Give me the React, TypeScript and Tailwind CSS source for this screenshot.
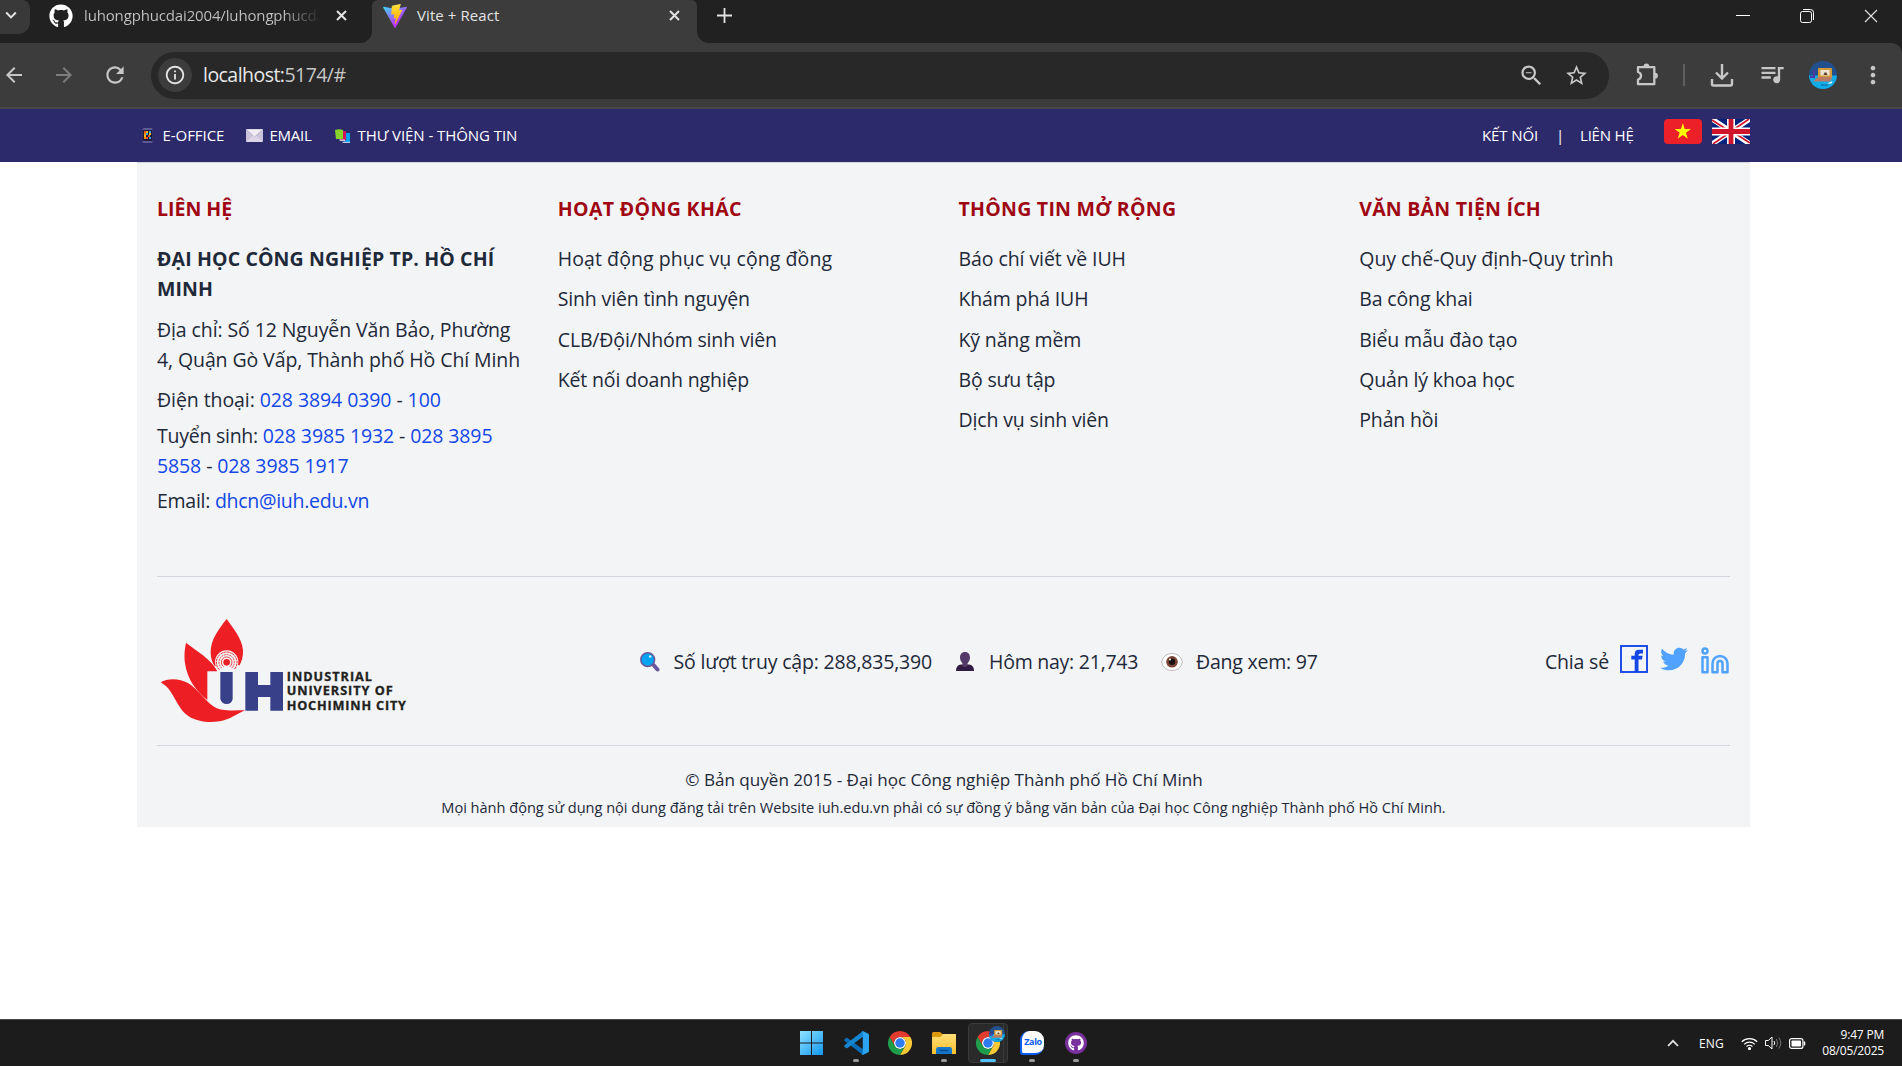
import React from "react";
import { FaGithub, FaTwitter } from "react-icons/fa";
import {
  MdArrowBack,
  MdArrowForward,
  MdRefresh,
  MdInfoOutline,
  MdZoomOut,
  MdStarOutline,
  MdQueueMusic,
  MdMoreVert,
} from "react-icons/md";
import { Linkedin } from "lucide-react";

function Chevron({ up = false, size = 12 }: { up?: boolean; size?: number }) {
  return (
    <svg width={size} height={size} viewBox="0 0 12 12" fill="none" stroke="#e3e3e3" strokeWidth={up ? 1.8 : 2}>
      <path d={up ? "M1 9l5-5.2L11 9" : "M1.2 3.5L6 8.4l4.8-4.9"} />
    </svg>
  );
}

function CloseX({ size = 11, width = 2 }: { size?: number; width?: number }) {
  return (
    <svg width={size} height={size} viewBox={`0 0 ${size} ${size}`} stroke="#e3e3e3" strokeWidth={width}>
      <path d={`M1 1L${size - 1} ${size - 1}M${size - 1} 1L1 ${size - 1}`} />
    </svg>
  );
}

function ViteLogo() {
  return (
    <svg width="24" height="24" viewBox="0 0 256 257" className="shrink-0">
      <defs>
        <linearGradient id="va" x1="-.8%" x2="57.6%" y1="7.7%" y2="78.4%">
          <stop offset="0%" stopColor="#41D1FF" />
          <stop offset="100%" stopColor="#BD34FE" />
        </linearGradient>
        <linearGradient id="vb" x1="43.4%" x2="50.3%" y1="2.2%" y2="89%">
          <stop offset="0%" stopColor="#FFEA83" />
          <stop offset="8.3%" stopColor="#FFDD35" />
          <stop offset="100%" stopColor="#FFA800" />
        </linearGradient>
      </defs>
      <path
        fill="url(#va)"
        d="M255.153 37.938L134.897 252.976c-2.483 4.44-8.862 4.466-11.382.048L.875 37.958c-2.746-4.814 1.371-10.646 6.827-9.67l120.385 21.517a6.537 6.537 0 0 0 2.322-.004l117.867-21.483c5.438-.991 9.574 4.796 6.877 9.62Z"
      />
      <path
        fill="url(#vb)"
        d="M185.432.063L96.44 17.501a3.268 3.268 0 0 0-2.634 3.014l-5.474 92.456a3.268 3.268 0 0 0 3.997 3.378l24.777-5.718c2.318-.535 4.413 1.507 3.936 3.838l-7.361 36.047c-.495 2.426 1.782 4.5 4.151 3.78l15.304-4.649c2.372-.72 4.652 1.36 4.15 3.788l-11.698 56.621c-.732 3.542 3.979 5.473 5.943 2.437l1.313-2.028l72.516-144.72c1.215-2.423-.88-5.186-3.54-4.672l-25.505 4.922c-2.396.462-4.435-1.77-3.759-4.114l16.646-57.705c.677-2.35-1.37-4.583-3.769-4.113Z"
      />
    </svg>
  );
}

function Avatar({ size }: { size: number }) {
  return (
    <svg width={size} height={size} viewBox="0 0 28 28">
      <defs>
        <clipPath id={`av${size}`}>
          <circle cx="14" cy="14" r="14" />
        </clipPath>
      </defs>
      <g clipPath={`url(#av${size})`}>
        <rect width="28" height="28" fill="#22508f" />
        <rect y="14.5" width="28" height="13.5" fill="#10abe8" />
        <path d="M4 9h2v7H4zM1 15h5v2H1z" fill="#4b3aa5" />
        <rect x="9" y="7" width="14" height="11" rx="1" fill="#d59a3a" />
        <rect x="11.5" y="9" width="9" height="5.500" fill="#eee3d2" />
        <path d="M14.500 14l1-2.500h2l1 2.500z" fill="#5c4432" />
        <path d="M4 20.500L9 16h14.500L21 20.500z" fill="#b77b67" />
        <path d="M18 22.500l5.500-2.500-1 2.500z" fill="#fff" />
        <path d="M12 24h7" stroke="#0a5d9a" />
      </g>
    </svg>
  );
}

function ChromeLogo() {
  return (
    <svg width="24" height="24" viewBox="0 0 48 48">
      <circle cx="24" cy="24" r="12" fill="#fff" />
      <path fill="#e33b2e" d="M24 12h20.78A24 24 0 0 0 3.215 12L13.608 30l.01-.002A11.985 11.985 0 0 1 24 12z" />
      <path fill="#fcc934" d="M34.39 30L24 48A23.99 23.99 0 0 0 44.78 12H24v.007A11.985 11.985 0 0 1 34.39 30z" />
      <path fill="#1e9e4a" d="M13.609 30L3.218 12A23.99 23.99 0 0 0 24 48l10.394-18v-.007A11.985 11.985 0 0 1 13.613 30z" />
      <circle cx="24" cy="24" r="9.500" fill="#2f7cf0" />
    </svg>
  );
}

function BrowserTabs() {
  return (
    <div className="flex h-[43px] items-start bg-[#202120] text-[15px] text-[#e3e3e3]">
      <div className="flex h-[34px] w-[30px] items-center rounded-br-[12px] rounded-tr-[8px] bg-[#383938] pb-1 pl-[5px]">
        <Chevron />
      </div>
      <div className="flex h-[31px] w-[342px] items-center pl-[19px]">
        <FaGithub className="size-[24px] shrink-0 text-white" />
        <span className="ml-[11px] mr-[18px] w-[234px] whitespace-nowrap bg-gradient-to-r from-[#c4c4c4] from-85% to-[#2c2d2c] bg-clip-text tracking-[-0.15px] text-transparent">
          luhongphucdai2004/luhongphucda
        </span>
        <CloseX />
      </div>
      <div className="relative flex h-[43px] w-[325px] rounded-t-[6px] bg-[#3c3c3c]">
        <svg className="absolute -left-[12px] bottom-0" width="12" height="12">
          <path d="M12 0A12 12 0 0 1 0 12H12z" fill="#3c3c3c" />
        </svg>
        <svg className="absolute -right-[12px] bottom-0" width="12" height="12">
          <path d="M0 0A12 12 0 0 0 12 12H0z" fill="#3c3c3c" />
        </svg>
        <div className="flex h-[31px] items-center pl-[11px]">
          <ViteLogo />
          <span className="ml-[10px] w-[252px] tracking-[0.08px]">Vite + React</span>
          <CloseX />
        </div>
      </div>
      <div className="flex h-[31px] flex-1 items-center pl-[20px]">
        <svg width="15" height="15" viewBox="0 0 15 15" stroke="#e3e3e3" strokeWidth="1.800">
          <path d="M7.500 0v15M0 7.500h15" />
        </svg>
        <div className="ml-auto flex items-center gap-[50px] pr-[24px]">
          <span className="h-px w-[14px] bg-white" />
          <svg width="14" height="14" viewBox="0 0 14 14" fill="none" stroke="#fff">
            <rect x="0.5" y="2.500" width="11" height="11" rx="2" />
            <path d="M3 0.500h7.500a3 3 0 0 1 3 3V11" />
          </svg>
          <CloseX size={14} width={1.1} />
        </div>
      </div>
    </div>
  );
}

function PuzzleIcon() {
  return (
    <svg className="ml-[27px]" width="24" height="24" viewBox="0 0 24 24">
      <path
        d="M2 4.200h16.300v17H2v-4.700q3-.8 3-3.800T2 9z"
        fill="none"
        stroke="#c7c7c7"
        strokeWidth="2.300"
        strokeLinejoin="round"
      />
      <path d="M7.500 3.500a2.900 2.900 0 0 1 5.800 0zM19 9.800a2.900 2.900 0 0 1 0 5.800z" fill="#c7c7c7" />
    </svg>
  );
}

function Toolbar() {
  return (
    <div className="bg-[#202120]">
      <div className="flex h-[66px] items-center rounded-tr-[10px] border-b-2 border-[#474747] bg-[#3c3c3c] text-[#c7c7c7]">
        <div className="flex w-[151px] items-center pl-[2px]">
          <MdArrowBack className="size-[24px]" />
          <MdArrowForward className="ml-[26px] size-[24px] text-[#7d7d7d]" />
          <MdRefresh className="ml-[26px] size-[26px]" />
        </div>
        <div className="flex h-[47px] w-[1458px] items-center rounded-full bg-[#282828] pl-[7px] pr-[20px]">
          <span className="flex size-[34px] items-center justify-center rounded-full bg-[#3c3c3c]">
            <MdInfoOutline className="size-[22px] text-[#e3e3e3]" />
          </span>
          <span className="ml-[11px] text-[19.5px] tracking-[-0.54px] text-[#c7c7c7]">
            <span className="text-[#e8e8e8]">localhost:</span>5174/#
          </span>
          <MdZoomOut className="ml-auto size-[27px]" />
          <MdStarOutline className="ml-[19px] size-[25px]" />
        </div>
        <PuzzleIcon />
        <span className="ml-[23px] h-[22px] w-[2px] bg-[#5e5e5e]" />
        <svg className="ml-[25px]" width="24" height="24" viewBox="0 0 24 24" fill="none" stroke="#c7c7c7" strokeWidth="2.400">
          <path d="M12 1v14M6 9.500l6 6 6-6" />
          <path d="M2 16v5q0 1.500 1.500 1.500h17q1.500 0 1.500-1.500v-5" />
        </svg>
        <MdQueueMusic className="mb-[2px] ml-[24px] size-[28px]" />
        <span className="ml-[23px]">
          <Avatar size={28} />
        </span>
        <MdMoreVert className="ml-[22px] size-[28px]" />
      </div>
    </div>
  );
}

function PhoneIcon() {
  return (
    <svg width="11" height="15" viewBox="0 0 11 15">
      <rect x=".5" width="10" height="15" rx="1.500" fill="#5d5a95" />
      <rect x=".5" y="2" width="10" height="11" fill="#231a3c" />
      <path d="M2 3h2v2H2zM6 7h2v2H6zM4 9h2v2H4z" fill="#f25022" />
      <path d="M4 3h2v2H4zM2 7h2v2H2zM7 5h2v2H7z" fill="#ffb900" />
      <path d="M7 3h2v2H7zM4 5h2v2H4zM7 9h2v2H7z" fill="#29a9e8" />
      <path d="M2 9h2v2H2zM2 5h2v2H2z" fill="#ff8c00" />
    </svg>
  );
}

function MailIcon() {
  return (
    <svg width="17" height="13" viewBox="0 0 17 13">
      <rect width="17" height="13" rx="1" fill="#cbc3d8" />
      <path d="M0 13l6.500-6h4L17 13z" fill="#ddd6e6" />
      <path d="M0 0h17L8.500 8z" fill="#f2eef6" stroke="#a79fba" strokeWidth=".6" />
    </svg>
  );
}

function BooksIcon() {
  return (
    <svg width="15" height="14" viewBox="0 0 15 14">
      <path d="M7 4h8v9H9z" fill="#00a1f1" />
      <path d="M7 12.800h8V14H8z" fill="#b9c6dc" />
      <path d="M4 2h7v9.500H5z" fill="#d2145a" />
      <path d="M4 10.500h6V12H5z" fill="#d9c4dc" />
      <path d="M0 1q4-1.500 8 0v9H1z" fill="#86d32b" />
    </svg>
  );
}

function FlagVN() {
  return (
    <svg width="38" height="25" viewBox="0 0 38 25">
      <rect width="38" height="25" rx="4" fill="#ec2028" />
      <path fill="#ffff00" d="M18.800 4l1.900 6h6.300l-5.100 3.700 1.950 6-5.050-3.700-5.100 3.700 1.950-6L10.600 10h6.300z" />
    </svg>
  );
}

function FlagUK() {
  return (
    <svg width="38" height="25" viewBox="0 0 38 25">
      <rect width="38" height="25" fill="#00247d" />
      <path d="M0 0l38 25M38 0L0 25" stroke="#fff" strokeWidth="5" />
      <path d="M0 1l17 11M21 13l17 11M37 0L21 11M17 14L1 25" stroke="#cf142b" strokeWidth="1.700" />
      <path d="M19 0v25M0 12.500h38" stroke="#fff" strokeWidth="8" />
      <path d="M19 0v25M0 12.500h38" stroke="#cf142b" strokeWidth="4.800" />
    </svg>
  );
}

function TopBar() {
  return (
    <header className="flex h-[53px] items-center bg-[#2d2a6c] pl-[142px] pr-[152px] text-[15px] text-white">
      <PhoneIcon />
      <a className="ml-[9.500px] w-[83.500px] whitespace-nowrap tracking-[-0.05px]">E-OFFICE</a>
      <MailIcon />
      <a className="ml-[6.500px] w-[65.500px] whitespace-nowrap tracking-[-0.25px]">EMAIL</a>
      <BooksIcon />
      <a className="ml-[7.500px] whitespace-nowrap tracking-[-0.06px]">THƯ VIỆN - THÔNG TIN</a>
      <div className="ml-auto flex items-center">
        <a className="w-[74px] whitespace-nowrap tracking-[-0.1px]">KẾT NỐI</a>
        <span className="w-[24px]">|</span>
        <a className="w-[84px] whitespace-nowrap tracking-[-0.2px]">LIÊN HỆ</a>
        <span className="mb-[8px] flex gap-[10px]">
          <FlagVN />
          <FlagUK />
        </span>
      </div>
    </header>
  );
}

const columns = [
  {
    title: "HOẠT ĐỘNG KHÁC",
    tracking: "tracking-[0.36px]",
    firstTracking: "tracking-[0.08px]",
    links: ["Hoạt động phục vụ cộng đồng", "Sinh viên tình nguyện", "CLB/Đội/Nhóm sinh viên", "Kết nối doanh nghiệp"],
  },
  {
    title: "THÔNG TIN MỞ RỘNG",
    tracking: "tracking-[0.26px]",
    firstTracking: "tracking-[-0.08px]",
    links: ["Báo chí viết về IUH", "Khám phá IUH", "Kỹ năng mềm", "Bộ sưu tập", "Dịch vụ sinh viên"],
  },
  {
    title: "VĂN BẢN TIỆN ÍCH",
    tracking: "tracking-[0.24px]",
    firstTracking: "tracking-[-0.04px]",
    links: ["Quy chế-Quy định-Quy trình", "Ba công khai", "Biểu mẫu đào tạo", "Quản lý khoa học", "Phản hồi"],
  },
];

function Contact() {
  return (
    <div>
      <h3 className="mb-[20px] font-bold text-[#9f0712]">LIÊN HỆ</h3>
      <p className="mb-[11px] whitespace-nowrap font-bold tracking-[0.13px]">
        ĐẠI HỌC CÔNG NGHIỆP TP. HỒ CHÍ
        <br />
        MINH
      </p>
      <p className="mb-[10px] whitespace-nowrap tracking-[-0.1px]">
        Địa chỉ: Số 12 Nguyễn Văn Bảo, Phường
        <br />
        4, Quận Gò Vấp, Thành phố Hồ Chí Minh
      </p>
      <p className="mb-[6px] tracking-[-0.08px]">
        Điện thoại: <a className="text-[#1447e6]">028 3894 0390</a> - <a className="text-[#1447e6]">100</a>
      </p>
      <p className="mb-[5px] whitespace-nowrap tracking-[-0.11px]">
        <span className="tracking-[-0.25px]">Tuyển sinh: </span>
        <a className="text-[#1447e6]">028 3985 1932</a> -{" "}
        <a className="text-[#1447e6]">
          028 3895
          <br />
          5858
        </a>{" "}
        - <a className="text-[#1447e6]">028 3985 1917</a>
      </p>
      <p className="tracking-[-0.27px]">
        Email: <a className="text-[#1447e6]">dhcn@iuh.edu.vn</a>
      </p>
    </div>
  );
}

function UniversityLogo() {
  return (
    <svg width="252" height="110" viewBox="81 165 756 330" className="font-['Open_Sans',sans-serif]">
      <g fill="#ed1f24">
        <path d="M290 177C268 205 240 240 242 280C243 298 248 310 254 318L327 318C335 306 340 290 339 270C336 236 310 205 290 177z" />
        <path d="M168 248C198 272 245 298 262 334H232V420C200 395 172 360 165 310C162 285 164 268 168 248z" />
        <path d="M92 367C112 354 148 354 174 369C204 388 226 422 250 439C275 456 312 451 345 451C325 460 305 474 282 481C250 490 205 488 176 469C148 450 138 418 122 395C114 383 104 374 92 367z" />
      </g>
      <circle cx="290" cy="306" r="35" fill="#f3f4f6" />
      <path d="M262 315H328V334H262z" fill="#f3f4f6" />
      <g fill="none" stroke="#ed1f24">
        <path d="M268 329A31 31 0 1 1 312 329" strokeWidth="3" strokeDasharray="7 2" />
        <path d="M276 325A23 23 0 1 1 304 325" strokeWidth="2.500" strokeDasharray="6 2" />
        <path d="M281 320A16 16 0 1 1 299 320" strokeWidth="2.500" />
      </g>
      <circle cx="290" cy="307" r="10" fill="#ed1f24" />
      <path d="M271 336H308V417Q305 432 290 432T271 417z" fill="#38408a" />
      <path d="M346 336H384V375H421V336H459V452H421V411H384V452H346z" fill="#38408a" />
      <g fill="#221f20" stroke="#221f20" strokeWidth="1" fontSize="38" fontWeight="700">
        <text x="470" y="363" textLength="256">INDUSTRIAL</text>
        <text x="470" y="406" textLength="318">UNIVERSITY OF</text>
        <text x="470" y="449" textLength="358">HOCHIMINH CITY</text>
      </g>
    </svg>
  );
}

function MagnifierIcon() {
  return (
    <svg width="20" height="20" viewBox="0 0 20 20">
      <path d="M13.500 13l4 4.500" stroke="#67589e" strokeWidth="4" strokeLinecap="round" />
      <circle cx="7.700" cy="7.700" r="6.900" fill="#00a3f0" stroke="#6a5797" strokeWidth="1.500" />
      <circle cx="10.200" cy="4.500" r="1.300" fill="#d3f0ff" />
    </svg>
  );
}

function PersonIcon() {
  return (
    <svg width="18" height="19" viewBox="0 0 18 19">
      <path d="M0 19q0-6 5-6.500h8q5 .5 5 6.500z" fill="#321b42" />
      <path d="M9 0c3.500 0 5 2.500 5 5.500S12.500 10 11.500 11.500V14L9 15.500 6.500 14v-2.500C5.500 10 4 8.500 4 5.500S5.500 0 9 0z" fill="#533a69" />
    </svg>
  );
}

function EyeIcon() {
  return (
    <svg width="22" height="18" viewBox="0 0 22 18">
      <path d="M.5 9Q2.500.5 11 .5T21.500 9Q19.500 17.500 11 17.500T.5 9z" fill="#fff" stroke="#b9b3b3" strokeWidth=".9" />
      <circle cx="11" cy="8.800" r="5.800" fill="#7c4636" />
      <circle cx="11" cy="8.800" r="3.200" fill="#1b1113" />
      <circle cx="9" cy="6.500" r="1" fill="#fff" />
    </svg>
  );
}

function FacebookIcon() {
  return (
    <svg width="28" height="28" viewBox="0 0 28 28">
      <rect x="1" y="1" width="26" height="26" fill="none" stroke="#1447e6" strokeWidth="1.900" />
      <path d="M14.700 27V14.500H11.300V10.700h3.400V9q0-4.300 4.300-4.300h4V8.500h-2.700q-1.800 0-1.800 1.600v.6h4.100l-.6 3.800h-3.500V27z" fill="#1447e6" />
    </svg>
  );
}

function Footer() {
  return (
    <footer className="ml-[137px] h-[665px] w-[1613px] border-t border-[#d1d5dc] bg-[#f3f4f6] px-[20px] pt-[31px] text-[19.5px] leading-[30px] text-[#1e2939]">
      <div className="grid h-[382px] grid-cols-4 gap-[30px]">
        <Contact />
        {columns.map((c) => (
          <div key={c.title}>
            <h3 className={`mb-[20px] font-bold text-[#9f0712] ${c.tracking}`}>{c.title}</h3>
            <ul className="space-y-[10.25px]">
              {c.links.map((l, i) => (
                <li key={l} className={i === 0 ? c.firstTracking : "tracking-[-0.15px]"}>
                  {l}
                </li>
              ))}
            </ul>
          </div>
        ))}
      </div>
      <div className="flex h-[170px] items-center border-y border-[#d1d5dc]">
        <div className="mt-[17px] w-[483px]">
          <UniversityLogo />
        </div>
        <div className="flex items-center whitespace-nowrap pt-[1px]">
          <MagnifierIcon />
          <span className="ml-[13.5px] w-[282.5px] tracking-[-0.18px]">Số lượt truy cập: 288,835,390</span>
          <PersonIcon />
          <span className="ml-[15px] w-[172px] tracking-[-0.24px]">Hôm nay: 21,743</span>
          <EyeIcon />
          <span className="ml-[13px] tracking-[-0.22px]">Đang xem: 97</span>
        </div>
        <div className="ml-auto flex items-center">
          <span className="mr-[11px] pt-[1px] tracking-[-0.18px]">Chia sẻ</span>
          <span className="mb-[5px] mr-[12px]">
            <FacebookIcon />
          </span>
          <FaTwitter className="mb-[5px] mr-[12px] size-[28px] text-[#51a2ff]" />
          <Linkedin className="size-[30px] text-[#51a2ff]" />
        </div>
      </div>
      <div className="pt-[20px] text-center">
        <p className="pl-px text-[17.1px] leading-[28px] tracking-[-0.02px]">
          © Bản quyền 2015 - Đại học Công nghiệp Thành phố Hồ Chí Minh
        </p>
        <p className="text-[14.6px] leading-[26px] tracking-[-0.03px]">
          Mọi hành động sử dụng nội dung đăng tải trên Website iuh.edu.vn phải có sự đồng ý bằng văn bản của Đại học Công
          nghiệp Thành phố Hồ Chí Minh.
        </p>
      </div>
    </footer>
  );
}

function TaskIcon({ children, mark }: { children: React.ReactNode; mark?: boolean }) {
  return (
    <div className="relative flex w-[44px] items-center justify-center">
      {children}
      {mark && <span className="absolute bottom-[4px] h-[3px] w-[6px] rounded-full bg-[#9a9a9a]" />}
    </div>
  );
}

function Taskbar() {
  return (
    <div className="flex h-[47px] items-stretch border-t border-[#474747] bg-[#1c1c1c] pl-[789px] text-white">
      <TaskIcon>
        <svg width="23" height="24" viewBox="0 0 23 24">
          <defs>
            <linearGradient id="win" x1="0" y1="0" x2="23" y2="24" gradientUnits="userSpaceOnUse">
              <stop offset="0" stopColor="#8fe3ff" />
              <stop offset="1" stopColor="#1296f0" />
            </linearGradient>
          </defs>
          <path fill="url(#win)" d="M0 0h11v11.500H0zM12 0h11v11.500H12zM0 12.500h11V24H0zM12 12.500h11V24H12z" />
        </svg>
      </TaskIcon>
      <div className="ml-px flex">
        <TaskIcon mark>
          <svg width="25" height="24" viewBox="0 0 100 100" preserveAspectRatio="none">
            <path d="M2 34l6-5q3-2 6 0l62 47v24L3 42q-4-4-1-8z" fill="#0b6db8" />
            <path d="M2 66l6 5q3 2 6 0l62-47V0L3 58q-4 4-1 8z" fill="#1585cf" />
            <path d="M70 0q4 0 7 1l19 9q4 2 4 7v66q0 5-4 7l-19 9q-3 1-7 1 5-2 5-8V8q0-6-5-8z" fill="#2ba3f0" />
          </svg>
        </TaskIcon>
        <TaskIcon>
          <ChromeLogo />
        </TaskIcon>
        <TaskIcon mark>
          <svg width="24" height="22" viewBox="0 0 24 22">
            <defs>
              <linearGradient id="fold" x1="0" y1="0" x2="0" y2="1">
                <stop offset="0" stopColor="#ffdf78" />
                <stop offset="1" stopColor="#fcbf2e" />
              </linearGradient>
            </defs>
            <path d="M0 1.500Q0 0 1.500 0H8l2.500 2H24v6H0z" fill="#dd9b0c" />
            <path d="M0 5h8.500L11 2h12q1 0 1 1V22H0z" fill="url(#fold)" />
            <path d="M4 22v-4.500q0-2.500 2.500-2.500h11q2.500 0 2.500 2.500V22z" fill="#1477c9" />
            <path d="M7.500 18.500h9" stroke="#0b4f92" strokeWidth="1.500" />
          </svg>
        </TaskIcon>
      </div>
      <div className="relative my-[3px] ml-[2px] flex w-[40px] items-center rounded-[4px] border border-[#3a3a3a] bg-[#2a2a2a] pl-[7px]">
        <span className="absolute -top-px bottom-[-1px] right-[3px] w-px bg-[#3a3a3a]" />
        <ChromeLogo />
        <span className="absolute left-[20px] top-[2px]">
          <Avatar size={16} />
        </span>
        <span className="absolute bottom-0 left-[11px] h-[3px] w-[16px] rounded-full bg-[#4cc2ff]" />
      </div>
      <div className="ml-[2px] flex">
        <TaskIcon mark>
          <div className="relative flex size-[24px] items-center justify-center rounded-[9px] rounded-bl-[3px] border-b-2 border-l-2 border-[#0a5cf0] bg-white text-[9px] font-bold tracking-[-0.4px] text-[#0a5cf0]">
            Zalo
          </div>
        </TaskIcon>
        <TaskIcon mark>
          <span className="flex size-[22px] items-center justify-center rounded-full bg-[#7a2f9e]">
            <FaGithub className="size-[16px] text-white" />
          </span>
        </TaskIcon>
      </div>
      <div className="ml-auto flex items-center pr-[18px] text-[12px]">
        <Chevron up />
        <span className="ml-[20px] w-[42px] pt-[2px] text-[12px] tracking-[0.1px]">ENG</span>
        <svg width="17" height="13" viewBox="0 0 17 13" fill="none" stroke="#fff" strokeWidth="1.200">
          <path d="M.8 4.800a11 11 0 0 1 15.400 0M3.200 7.300a7.500 7.500 0 0 1 10.600 0M5.500 9.600a4.300 4.300 0 0 1 6 0" />
          <circle cx="8.500" cy="11.500" r="1" fill="#fff" />
        </svg>
        <svg className="ml-[7px]" width="17" height="14" viewBox="0 0 17 14" fill="none" stroke="#fff">
          <path d="M.5 4.500h2.800L7 1v12L3.300 9.500H.5z" />
          <path d="M9 5q1.500 2 0 4" />
          <path d="M11.300 3q3 4 0 8M13.800 1.500q4 5.500 0 11" stroke="#777" />
        </svg>
        <svg className="ml-[7px]" width="17" height="11" viewBox="0 0 17 11">
          <rect x=".6" y=".6" width="13.300" height="9.800" rx="2" fill="none" stroke="#fff" strokeWidth="1.200" />
          <rect x="2.500" y="2.500" width="9.500" height="6" rx=".8" fill="#fff" />
          <path d="M15.500 3.500v4" stroke="#fff" strokeWidth="1.500" />
        </svg>
        <div className="ml-[14px] w-[64px] text-right leading-[16px] tracking-[-0.2px]">
          <div>9:47 PM</div>
          <div>08/05/2025</div>
        </div>
      </div>
    </div>
  );
}

export default function App() {
  return (
    <div className="flex h-[1066px] w-[1902px] flex-col overflow-hidden bg-white font-['Open_Sans','Noto_Sans',sans-serif]">
      <BrowserTabs />
      <Toolbar />
      <TopBar />
      <main className="flex-1">
        <Footer />
      </main>
      <Taskbar />
    </div>
  );
}
